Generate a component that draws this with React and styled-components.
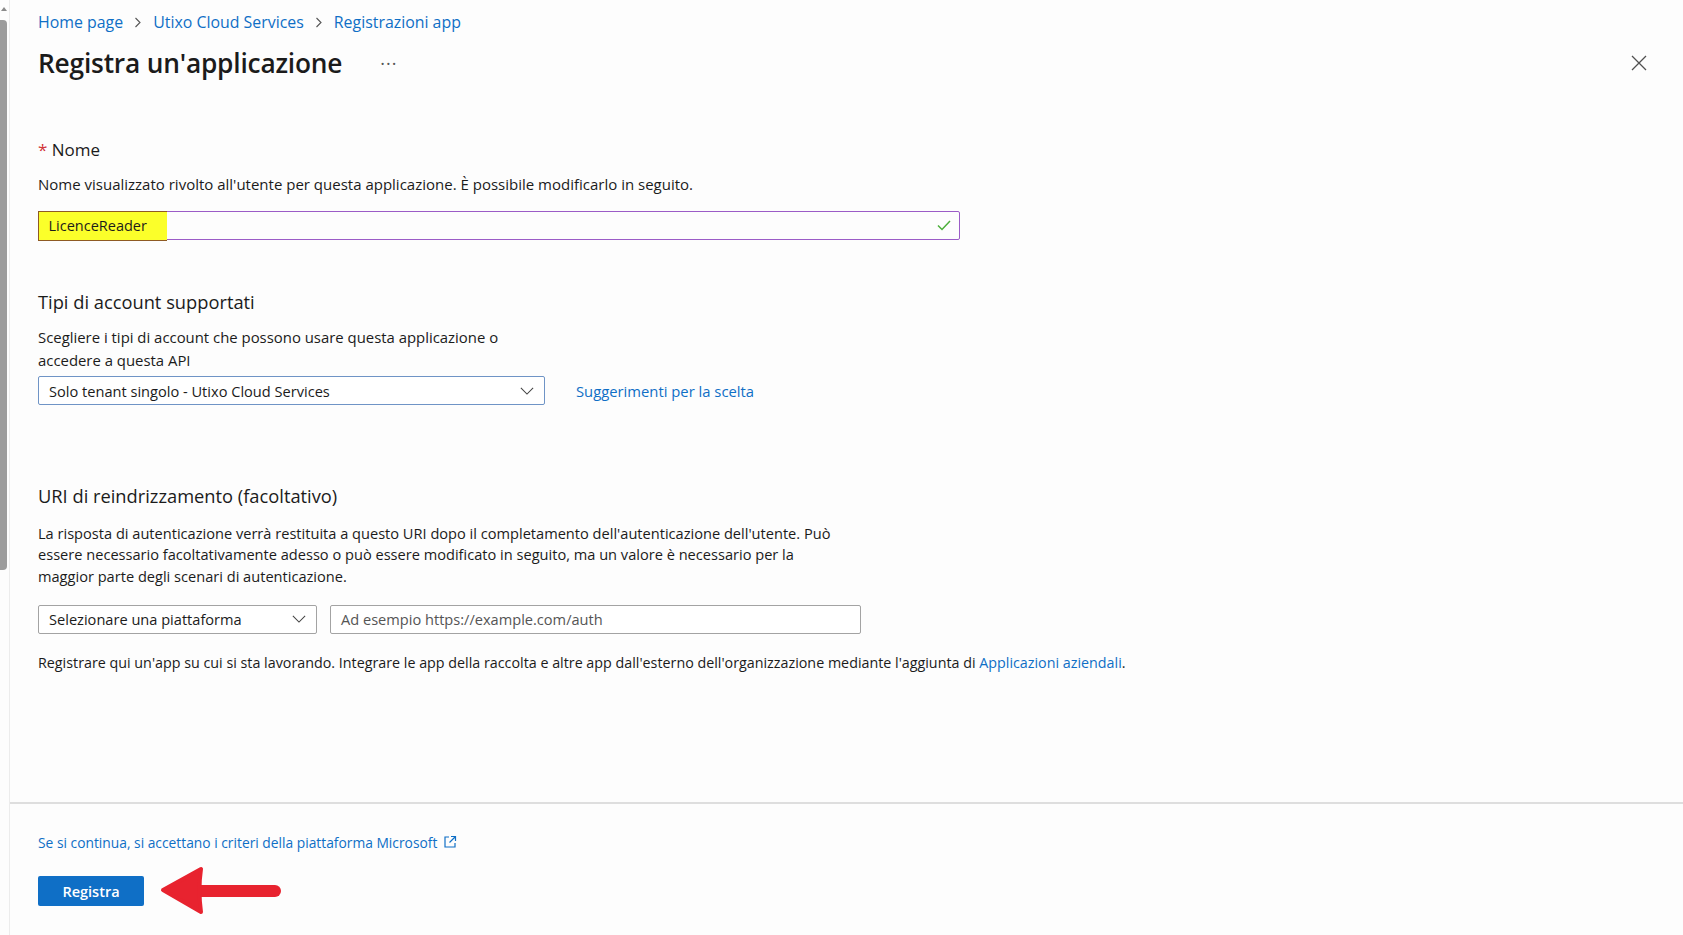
import React from 'react';
import styled, { createGlobalStyle } from 'styled-components';

const GlobalStyle = createGlobalStyle`
  html, body {
    margin: 0;
    padding: 0;
    background: #fdfdfd;
  }
  body {
    font-family: "Open Sans", "Noto Sans", sans-serif;
    color: #1b1b1b;
  }
`;

const Chevron = ({ size = 14 }) => (
  <svg width={size} height={size / 2 + 1} viewBox="0 0 16 9" fill="none">
    <path d="M1 1 L8 8 L15 1" stroke="#444" strokeWidth="1.2" />
  </svg>
);

const CrumbArrow = () => (
  <svg width="8" height="11" viewBox="0 0 8 11" fill="none">
    <path d="M1.5 1 L6 5.5 L1.5 10" stroke="#555" strokeWidth="1.1" />
  </svg>
);

const App = () => {
  return (
    <Shell>
      <GlobalStyle />
      <ScrollTrack>
        <ScrollArrow />
        <ScrollThumb />
      </ScrollTrack>

      <Pane>
        <Content>
          <Breadcrumb>
            <Crumb>Home page</Crumb>
            <CrumbSep>
              <CrumbArrow />
            </CrumbSep>
            <Crumb>Utixo Cloud Services</Crumb>
            <CrumbSep>
              <CrumbArrow />
            </CrumbSep>
            <Crumb>Registrazioni app</Crumb>
          </Breadcrumb>

          <TitleRow>
            <Title>Registra un'applicazione</Title>
            <MoreDots>···</MoreDots>
            <CloseButton>
              <svg width="16" height="16" viewBox="0 0 16 16" fill="none">
                <path d="M1 1 L15 15 M15 1 L1 15" stroke="#505050" strokeWidth="1.3" />
              </svg>
            </CloseButton>
          </TitleRow>

          <FieldLabel>
            <Required>*</Required> Nome
          </FieldLabel>
          <Help $mt={13} $size={15}>
            Nome visualizzato rivolto all'utente per questa applicazione. È possibile modificarlo in seguito.
          </Help>
          <NameInput>
            <Marked>LicenceReader</Marked>
            <CheckMark>
              <svg width="14" height="11" viewBox="0 0 14 11" fill="none">
                <path d="M1 5.5 L5 9.5 L13 1" stroke="#4caf3a" strokeWidth="1.5" />
              </svg>
            </CheckMark>
          </NameInput>

          <SectionTitle $mt={50}>Tipi di account supportati</SectionTitle>
          <Help $mt={12} $size={14.9} $width={480} $lh={22.5}>
            Scegliere i tipi di account che possono usare questa applicazione o accedere a questa API
          </Help>
          <InlineRow $mt={5}>
            <Select $width={507} $border="#6f94c6">
              <span>Solo tenant singolo - Utixo Cloud Services</span>
              <Chevron />
            </Select>
            <Link>Suggerimenti per la scelta</Link>
          </InlineRow>

          <SectionTitle $mt={79}>URI di reindrizzamento (facoltativo)</SectionTitle>
          <Help $mt={15} $size={14.6} $width={800} $lh={21.25}>
            La risposta di autenticazione verrà restituita a questo URI dopo il completamento dell'autenticazione dell'utente. Può essere necessario facoltativamente adesso o può essere modificato in seguito, ma un valore è necessario per la maggior parte degli scenari di autenticazione.
          </Help>
          <UriRow>
            <Select $width={279} $border="#a3a3a3">
              <span>Selezionare una piattaforma</span>
              <Chevron />
            </Select>
            <UrlBox>Ad esempio https://example.com/auth</UrlBox>
          </UriRow>
          <Help $mt={19} $size={14.3}>
            Registrare qui un'app su cui si sta lavorando. Integrare le app della raccolta e altre app dall'esterno dell'organizzazione mediante l'aggiunta di{' '}
            <Link $size={14.3}>Applicazioni aziendali</Link>.
          </Help>
        </Content>

        <Footer>
          <FooterLink>
            Se si continua, si accettano i criteri della piattaforma Microsoft
            <svg width="14" height="14" viewBox="0 0 14 14" fill="none">
              <path d="M6 2 H2 V12 H12 V8" stroke="#0f6fc6" strokeWidth="1.2" />
              <path d="M8 1.5 H12.5 V6 M12.5 1.5 L6.5 7.5" stroke="#0f6fc6" strokeWidth="1.2" />
            </svg>
          </FooterLink>
          <ActionRow>
            <PrimaryButton>Registra</PrimaryButton>
            <svg width="122" height="50" viewBox="0 0 122 50" fill="none">
              <path d="M40 25 H115" stroke="#e8232f" strokeWidth="12" strokeLinecap="round" />
              <path
                d="M3 24 L41 3 Q38 24 41 46 Z"
                fill="#e8232f"
                stroke="#e8232f"
                strokeWidth="4"
                strokeLinejoin="round"
              />
            </svg>
          </ActionRow>
        </Footer>
      </Pane>
    </Shell>
  );
};

const Shell = styled.div`
  display: flex;
  width: 1683px;
  height: 935px;
  overflow: hidden;
`;

const ScrollTrack = styled.div`
  width: 9px;
  display: flex;
  flex-direction: column;
  align-items: flex-start;
  padding-top: 7px;
  box-sizing: border-box;
`;

const ScrollArrow = styled.div`
  width: 0;
  height: 0;
  margin-left: 1px;
  border-left: 3px solid transparent;
  border-right: 3px solid transparent;
  border-bottom: 4px solid #8a8a8a;
`;

const ScrollThumb = styled.div`
  margin-top: 9px;
  width: 7px;
  height: 550px;
  border-radius: 0 4px 4px 0;
  background: #9c9c9c;
`;

const Pane = styled.div`
  flex: 1;
  display: flex;
  flex-direction: column;
  border-left: 1px solid #ececec;
`;

const Content = styled.div`
  flex: 1;
  display: flex;
  flex-direction: column;
  align-items: flex-start;
  padding: 12px 36px 0 28px;
`;

const Breadcrumb = styled.nav`
  display: flex;
  align-items: center;
  height: 20px;
  font-size: 15.9px;
`;

const Crumb = styled.a`
  color: #0f6fc6;
  cursor: pointer;
`;

const CrumbSep = styled.span`
  display: flex;
  margin: 0 11px;
`;

const TitleRow = styled.div`
  align-self: stretch;
  display: flex;
  align-items: center;
  margin-top: 13px;
  height: 36px;
`;

const Title = styled.h1`
  margin: 0;
  font-size: 26.3px;
  font-weight: 600;
  letter-spacing: -0.2px;
`;

const MoreDots = styled.span`
  margin-left: 38px;
  font-size: 18px;
  color: #555;
  letter-spacing: 1px;
`;

const CloseButton = styled.button`
  margin-left: auto;
  border: none;
  background: none;
  padding: 0;
  display: flex;
`;

const FieldLabel = styled.div`
  margin-top: 58px;
  font-size: 17px;
  line-height: 22px;
`;

const Required = styled.span`
  color: #d13438;
`;

const Help = styled.p`
  margin: ${(p) => p.$mt || 0}px 0 0;
  font-size: ${(p) => p.$size || 14.6}px;
  line-height: ${(p) => p.$lh || 20}px;
  max-width: ${(p) => (p.$width ? `${p.$width}px` : 'none')};
`;

const NameInput = styled.div`
  margin-top: 17px;
  width: 922px;
  height: 29px;
  box-sizing: border-box;
  border: 1.5px solid #9b5cc7;
  border-radius: 2px;
  display: flex;
  align-items: stretch;
`;

const Marked = styled.span`
  display: flex;
  align-items: center;
  padding: 0 20px 0 10px;
  margin: -1.5px 0 -1.5px -1.5px;
  background: #fbff2a;
  border: 1.5px solid #8e5a24;
  border-right: none;
  font-size: 14.5px;
`;

const CheckMark = styled.span`
  margin-left: auto;
  margin-right: 8px;
  display: flex;
  align-items: center;
`;

const SectionTitle = styled.h2`
  margin: ${(p) => p.$mt}px 0 0;
  font-size: 18.3px;
  font-weight: 400;
  line-height: 24px;
`;

const InlineRow = styled.div`
  margin-top: ${(p) => p.$mt}px;
  display: flex;
  align-items: center;
  gap: 31px;
`;

const Select = styled.div`
  width: ${(p) => p.$width}px;
  height: 29px;
  box-sizing: border-box;
  border: 1px solid ${(p) => p.$border};
  border-radius: 2px;
  display: flex;
  align-items: center;
  justify-content: space-between;
  padding: 0 10px;
  font-size: 14.6px;
  background: #fff;
`;

const Link = styled.a`
  color: #0f6fc6;
  font-size: ${(p) => p.$size || 14.8}px;
  cursor: pointer;
`;

const UriRow = styled.div`
  margin-top: 18px;
  display: flex;
  gap: 13px;
`;

const UrlBox = styled.div`
  width: 531px;
  height: 29px;
  box-sizing: border-box;
  border: 1px solid #a3a3a3;
  border-radius: 2px;
  display: flex;
  align-items: center;
  padding: 0 10px;
  font-size: 14.6px;
  color: #555;
  background: #fff;
`;

const Footer = styled.div`
  height: 133px;
  box-sizing: border-box;
  border-top: 2px solid #dedede;
  padding: 28px 0 0 28px;
  display: flex;
  flex-direction: column;
  align-items: flex-start;
`;

const FooterLink = styled.a`
  display: flex;
  align-items: center;
  gap: 6px;
  height: 20px;
  font-size: 13.8px;
  color: #0f6fc6;
  cursor: pointer;
`;

const ActionRow = styled.div`
  margin-top: 14px;
  display: flex;
  align-items: center;
  gap: 16px;
`;

const PrimaryButton = styled.button`
  width: 106px;
  height: 30px;
  border: none;
  border-radius: 2px;
  background: #0f6fc6;
  color: #fff;
  font-family: inherit;
  font-size: 14.5px;
  font-weight: 600;
`;

export default App;
